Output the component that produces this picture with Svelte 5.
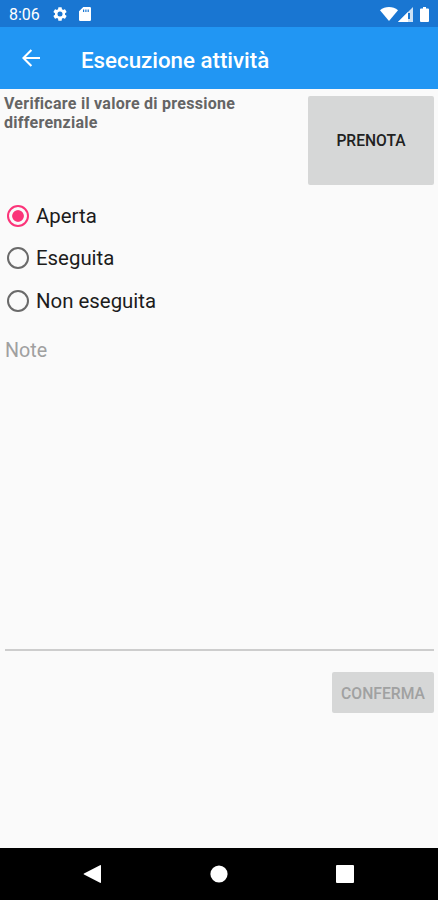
<script>
  const options = [
    { value: 'open', label: 'Aperta' },
    { value: 'done', label: 'Eseguita' },
    { value: 'not-done', label: 'Non eseguita' }
  ];

  let status = $state('open');
  let note = $state('');
</script>

<div class="screen">
  <div class="status-bar">
    <span class="clock">8:06</span>
    <svg class="gear" viewBox="2 2 20 20" width="14" height="14">
      <path fill="#fff" d="M19.14 12.94c.04-.3.06-.61.06-.94s-.02-.64-.07-.94l2.03-1.58a.49.49 0 0 0 .12-.61l-1.92-3.32a.49.49 0 0 0-.59-.22l-2.39.96a7 7 0 0 0-1.62-.94l-.36-2.54A.48.48 0 0 0 13.92 2.4h-3.84a.48.48 0 0 0-.48.41l-.36 2.54c-.59.24-1.13.57-1.62.94l-2.39-.96a.49.49 0 0 0-.59.22L2.73 8.87a.48.48 0 0 0 .12.61l2.03 1.58a6 6 0 0 0 0 1.88l-2.03 1.58a.49.49 0 0 0-.12.61l1.92 3.32c.12.22.37.29.59.22l2.39-.96c.5.38 1.03.7 1.62.94l.36 2.54c.05.24.24.41.47.41h3.84c.24 0 .44-.17.47-.41l.36-2.54a7 7 0 0 0 1.62-.94l2.39.96c.22.08.47 0 .59-.22l1.92-3.32a.48.48 0 0 0-.12-.61zM12 15.6a3.6 3.6 0 1 1 0-7.2 3.6 3.6 0 0 1 0 7.2z" />
    </svg>
    <svg class="sd" viewBox="0 0 12 14" width="12" height="14">
      <path fill="#fff" fill-rule="evenodd" d="M4.3 0H10.8Q12 0 12 1.2V12.8Q12 14 10.8 14H1.2Q0 14 0 12.8V4.3ZM4 2.5V5H5.2V2.5ZM6.3 2.5V5H7.5V2.5ZM8.6 2.5V5H9.8V2.5Z" />
    </svg>
    <div class="spacer"></div>
    <svg class="wifi" viewBox="0 0 18 14" width="18" height="14">
      <path fill="#fff" d="M0 3.3C5 -1 13 -1 18 3.3L9 14Z" />
    </svg>
    <svg class="signal" viewBox="0 0 15 15" width="15" height="15">
      <path fill="#fff" fill-opacity=".78" d="M15 0V15H0Z" />
      <path fill="#fff" d="M10 5V15H0Z" />
      <path fill="#1976d2" d="M10 6H12V12H10Z" />
    </svg>
    <svg viewBox="0 0 9 15" width="9" height="15">
      <path fill="#fff" d="M3 0H6V1.4H8Q9 1.4 9 2.4V14Q9 15 8 15H1Q0 15 0 14V2.4Q0 1.4 1 1.4H3Z" />
    </svg>
  </div>

  <header class="app-bar">
    <button class="back" aria-label="Indietro">
      <svg viewBox="0 0 18 18" width="18" height="18">
        <path fill="none" stroke="#fff" stroke-width="2.1" d="M18 9H1.8M9.4 .9L1.4 9L9.4 17.1" />
      </svg>
    </button>
    <h1>Esecuzione attività</h1>
  </header>

  <main>
    <div class="task">
      <p>Verificare il valore di pressione differenziale</p>
      <button class="book">PRENOTA</button>
    </div>

    <div class="options">
      {#each options as option}
        <label>
          <input type="radio" name="status" bind:group={status} value={option.value} />
          <span>{option.label}</span>
        </label>
      {/each}
    </div>

    <textarea placeholder="Note" bind:value={note}></textarea>

    <div class="actions">
      <button class="confirm" disabled>CONFERMA</button>
    </div>
  </main>

  <nav>
    <svg viewBox="0 0 18 20" width="18" height="20">
      <path fill="#fff" d="M17 1.2Q18 .7 18 1.8V18.2Q18 19.3 17 18.8L1 10.5Q0 10 1 9.5Z" />
    </svg>
    <svg viewBox="0 0 18 18" width="18" height="18">
      <circle cx="9" cy="9" r="8.6" fill="#fff" />
    </svg>
    <svg viewBox="0 0 18 18" width="18" height="18">
      <rect width="18" height="18" rx="1" fill="#fff" />
    </svg>
  </nav>
</div>

<style>
  :global(body) {
    background: #fafafa;
  }

  .screen {
    display: flex;
    flex-direction: column;
    height: 900px;
    overflow: hidden;
    background: #fafafa;
    font-family: Roboto, sans-serif;
  }

  .screen * {
    box-sizing: border-box;
  }

  button {
    border: none;
    padding: 0;
    font-family: inherit;
  }

  svg {
    display: block;
    flex: none;
  }

  .status-bar {
    flex: none;
    display: flex;
    align-items: center;
    height: 27px;
    padding: 1px 9px 0;
    background: #1976d2;
    color: #fff;
  }

  .clock {
    width: 44px;
    padding-top: 1px;
    font-size: 16px;
    line-height: 25px;
  }

  .sd {
    margin-left: 12px;
  }

  .spacer {
    flex: 1;
  }

  .signal {
    margin: 0 7px 0 0;
  }

  .app-bar {
    flex: none;
    display: flex;
    align-items: center;
    height: 62px;
    padding-left: 22px;
    background: #2196f3;
    color: #fff;
  }

  .back {
    width: 59px;
    background: none;
  }

  h1 {
    margin: 3px 0 0;
    font-size: 22.3px;
    font-weight: 500;
    line-height: 28px;
  }

  main {
    flex: 1;
    display: flex;
    flex-direction: column;
    padding: 4px 4px 0;
  }

  .task {
    display: flex;
    justify-content: space-between;
    height: 102px;
  }

  .task p {
    width: 250px;
    margin: 1px 0 0;
    color: #656565;
    font-size: 16px;
    font-weight: 700;
    letter-spacing: 0.26px;
    line-height: 19px;
  }

  .book {
    width: 126px;
    height: 89px;
    margin-top: 3px;
    padding-top: 1px;
    border-radius: 2px;
    background: #d6d7d7;
    color: #212121;
    font-size: 15.6px;
    font-weight: 500;
  }

  .options {
    display: flex;
    flex-direction: column;
    padding-left: 3px;
  }

  label {
    display: flex;
    align-items: center;
    gap: 7px;
    height: 42.3px;
    color: #1c1c1c;
    font-size: 20.4px;
  }

  input {
    appearance: none;
    width: 22px;
    height: 22px;
    margin: 0;
    border: 2px solid #6a6a6a;
    border-radius: 50%;
  }

  input:checked {
    border-color: #fb3479;
    background: radial-gradient(circle, #fb3479 5.4px, transparent 6.2px);
  }

  textarea {
    flex: none;
    height: 312px;
    margin: 17px 0 0 1px;
    padding: 0;
    border: none;
    border-bottom: 2px solid #cdcdcd;
    outline: none;
    resize: none;
    background: none;
    color: #212121;
    font-family: inherit;
    font-size: 19.7px;
    line-height: 24px;
  }

  textarea::placeholder {
    color: #a0a0a0;
    opacity: 1;
  }

  .actions {
    display: flex;
    justify-content: flex-end;
    padding-top: 21px;
  }

  .confirm {
    width: 102px;
    height: 41px;
    padding-top: 2px;
    border-radius: 2px;
    background: #d6d7d7;
    color: #a0a1a1;
    font-size: 15.7px;
    font-weight: 500;
  }

  nav {
    flex: none;
    display: flex;
    align-items: center;
    justify-content: space-between;
    height: 52px;
    padding: 0 84px 0 83px;
    background: #000;
  }
</style>
